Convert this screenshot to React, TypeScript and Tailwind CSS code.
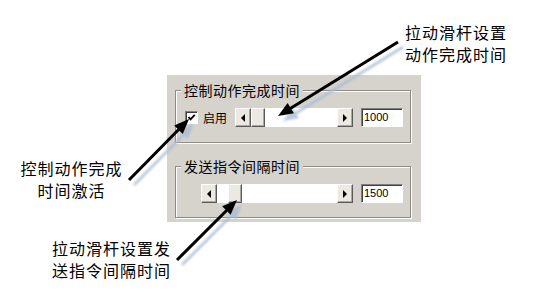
type Pt = [number, number];

const arrows: { from: Pt; to: Pt }[] = [
  { from: [398, 42], to: [278, 116] },
  { from: [129, 180], to: [189, 119] },
  { from: [177, 260], to: [237, 200] },
];

// line + triangular head, optionally shifted (for the soft shadow)
function arrowShape(from: Pt, to: Pt, dx = 0, dy = 0) {
  const vx = to[0] - from[0];
  const vy = to[1] - from[1];
  const len = Math.hypot(vx, vy);
  const ux = vx / len;
  const uy = vy / len;
  const head = 15;
  const half = 6;
  const bx = to[0] - ux * head;
  const by = to[1] - uy * head;
  const pts = [
    [to[0], to[1]],
    [bx - uy * half, by + ux * half],
    [bx + uy * half, by - ux * half],
  ]
    .map(([x, y]) => `${x + dx},${y + dy}`)
    .join(" ");
  return {
    x1: from[0] + dx,
    y1: from[1] + dy,
    x2: bx + ux * 2 + dx,
    y2: by + uy * 2 + dy,
    pts,
  };
}

function Arrows() {
  return (
    <svg className="pointer-events-none absolute left-0 top-0" width="536" height="295">
      <defs>
        <filter id="soft" x="-20%" y="-20%" width="140%" height="140%">
          <feGaussianBlur stdDeviation="0.9" />
        </filter>
      </defs>
      {arrows.map((a, i) => {
        const s = arrowShape(a.from, a.to, 5, 5);
        return (
          <g key={"s" + i} filter="url(#soft)" opacity="0.8">
            <line x1={s.x1} y1={s.y1} x2={s.x2} y2={s.y2} stroke="#a9bcd3" strokeWidth="3" />
            <polygon points={s.pts} fill="#a9bcd3" />
          </g>
        );
      })}
      {arrows.map((a, i) => {
        const s = arrowShape(a.from, a.to);
        return (
          <g key={"a" + i}>
            <line x1={s.x1} y1={s.y1} x2={s.x2} y2={s.y2} stroke="#000" strokeWidth="3" />
            <polygon points={s.pts} fill="#000" />
          </g>
        );
      })}
    </svg>
  );
}

function ScrollBtn({ dir }: { dir: "left" | "right" }) {
  return (
    <div className="flex h-[19px] w-[16px] shrink-0 items-center justify-center border border-t-white border-l-white border-r-[#5a5a5a] border-b-[#5a5a5a] bg-[#ebe9e2] shadow-[inset_-1px_-1px_0_#aaa8a2]">
      {dir === "left" ? (
        <div className="h-0 w-0 border-y-[4px] border-r-[4px] border-y-transparent border-r-black" />
      ) : (
        <div className="h-0 w-0 border-y-[4px] border-l-[4px] border-y-transparent border-l-black" />
      )}
    </div>
  );
}

function ScrollBar({ className, offset }: { className: string; offset: string }) {
  return (
    <div className={"flex h-[19px] shrink-0 bg-white " + className}>
      <ScrollBtn dir="left" />
      <div className="flex flex-1">
        <div className={offset} />
        <div className="h-[19px] w-[14px] border border-t-white border-l-white border-r-[#5a5a5a] border-b-[#5a5a5a] bg-[#ebe9e2] shadow-[inset_-1px_-1px_0_#aaa8a2]" />
      </div>
      <ScrollBtn dir="right" />
    </div>
  );
}

function NumBox({ value }: { value: string }) {
  return (
    <div className="h-[19px] w-[42px] shrink-0 border border-t-[#808080] border-l-[#808080] border-r-white border-b-white bg-white pl-[2px] font-['Liberation_Sans',sans-serif] text-[11px] leading-[16px] text-black shadow-[inset_1px_1px_0_#404040]">
      {value}
    </div>
  );
}

function Group({ title, children, className }: { title: string; children: React.ReactNode; className?: string }) {
  return (
    <fieldset
      className={
        "m-0 min-w-0 border border-[#8d8b87] pl-[9px] pr-[7px] pt-[10px] shadow-[inset_1px_1px_0_#fff,1px_1px_0_#fff] " +
        (className ?? "")
      }
    >
      <legend className="-ml-[4px] bg-[#d6d3cd] px-[3px] text-[14px] leading-[16px] tracking-[0.5px] text-black">
        {title}
      </legend>
      {children}
    </fieldset>
  );
}

function Panel() {
  return (
    <div className="h-[147px] w-[254px] shrink-0 bg-[#d6d3cd] pl-[8px] pr-[10px] pt-[7px]">
      <Group title="控制动作完成时间" className="pb-[15px]">
        <div className="flex items-center">
          <div className="flex h-[13px] w-[13px] shrink-0 items-center justify-center border border-t-[#808080] border-l-[#808080] border-r-white border-b-white bg-white shadow-[inset_1px_1px_0_#404040]">
            <svg width="9" height="9" viewBox="0 0 9 9">
              <path d="M1.5 4 L3.5 6.3 L7.8 1.8" fill="none" stroke="#000" strokeWidth="1.9" />
            </svg>
          </div>
          <span className="ml-[5px] w-[24px] text-[12px] leading-[14px] text-black">启用</span>
          <ScrollBar className="ml-[8px] w-[118px]" offset="w-[0px]" />
          <div className="ml-[8px]">
            <NumBox value="1000" />
          </div>
        </div>
      </Group>
      <Group title="发送指令间隔时间" className="mt-[15px] pb-[14px]">
        <div className="flex items-center justify-end">
          <ScrollBar className="w-[152px]" offset="w-[11px]" />
          <div className="ml-[8px]">
            <NumBox value="1500" />
          </div>
        </div>
      </Group>
    </div>
  );
}

export default function App() {
  return (
    <div className="relative h-[295px] w-[536px] overflow-hidden bg-white font-['Noto_Sans_CJK_SC',sans-serif] text-black">
      <div className="ml-[405px] pt-[21px] text-[16px] leading-[22px] tracking-[1px]">
        <div>拉动滑杆设置</div>
        <div>动作完成时间</div>
      </div>
      <div className="mt-[10px] flex items-start">
        <div className="mr-[24px] w-[143px] shrink-0 pt-[82px] text-center text-[16px] leading-[22px] tracking-[1px]">
          <div>控制动作完成</div>
          <div>时间激活</div>
        </div>
        <Panel />
      </div>
      <div className="ml-[52px] mt-[15px] text-[16px] leading-[22px] tracking-[1px]">
        <div>拉动滑杆设置发</div>
        <div>送指令间隔时间</div>
      </div>
      <Arrows />
    </div>
  );
}
